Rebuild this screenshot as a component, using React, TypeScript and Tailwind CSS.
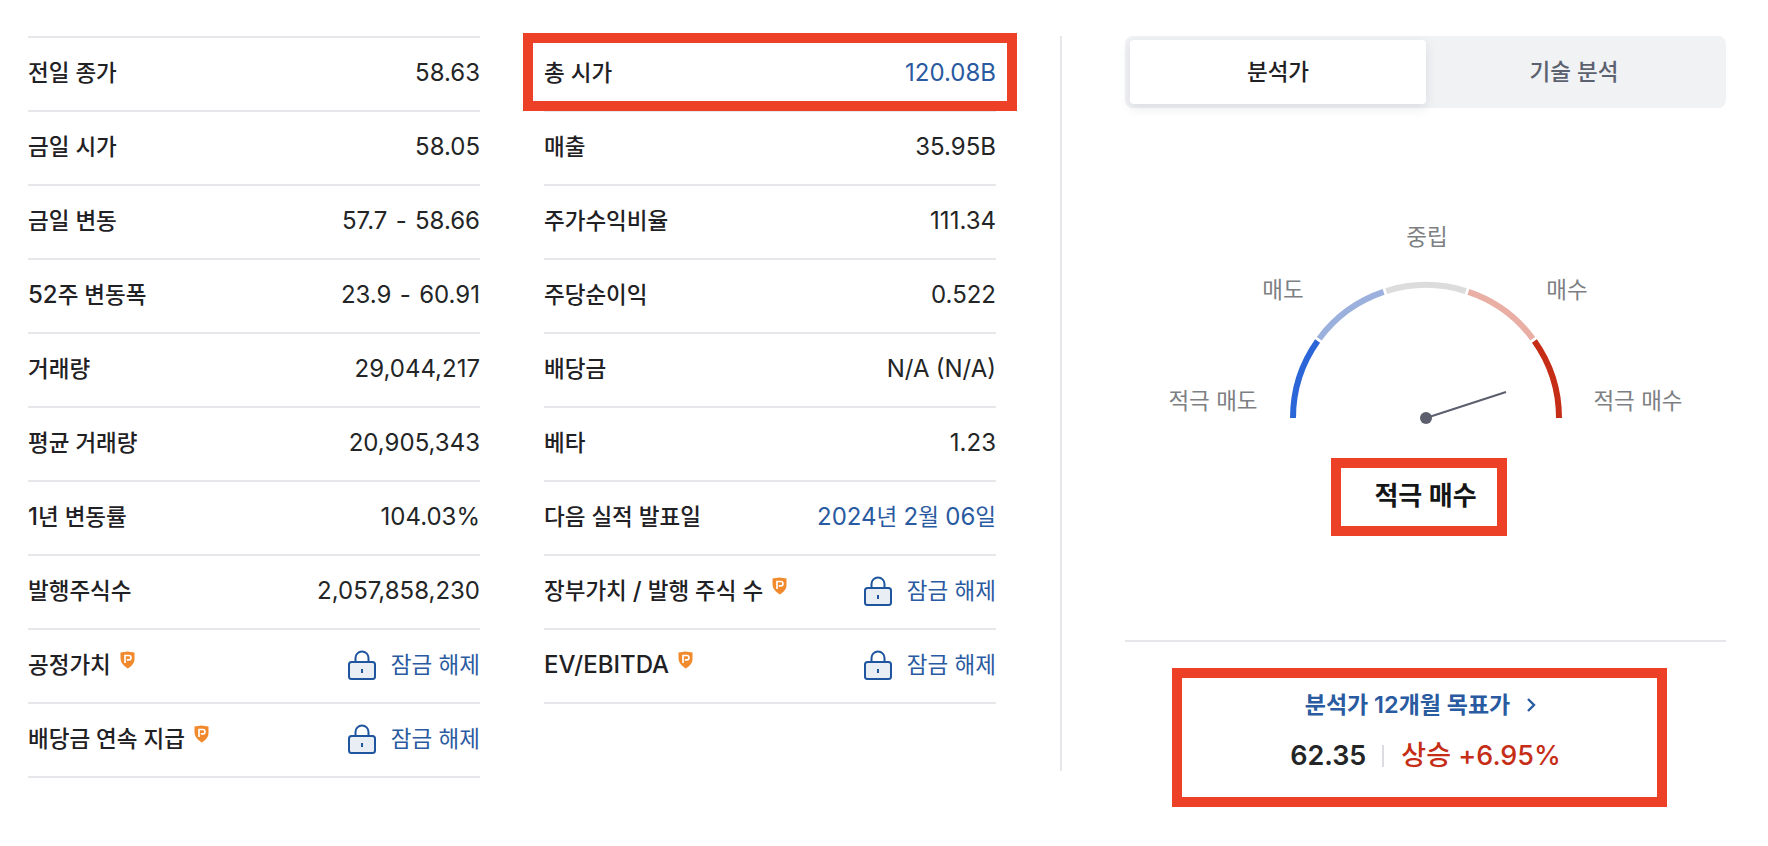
import React from "react";

function Mix({ text, latin = "text-[24px]" }: { text: string; latin?: string }) {
  const parts = text.split(/([A-Za-z0-9.,%+\-/()]+)/);
  return (
    <>
      {parts.map((p, i) =>
        i % 2 === 1 ? (
          <span key={i} className={latin}>
            {p}
          </span>
        ) : (
          <span key={i}>{p}</span>
        )
      )}
    </>
  );
}

function Shield() {
  return (
    <svg width="15" height="18" viewBox="0 0 15 18" className="shrink-0">
      <path d="M0.5 1.5 L7.5 0.5 L14.5 1.5 L14.5 8 C14.5 12 11.5 15.5 7.5 17.5 C5.5 15.5 0.5 13 0.5 7 Z" fill="#f08a2c" />
      <path d="M5 12 V4.5 H9 C11.6 4.5 11.6 8.8 9 8.8 H6.8" fill="none" stroke="#fff" strokeWidth="1.7" />
    </svg>
  );
}

function Lock() {
  return (
    <svg width="28" height="30" viewBox="0 0 28 30" className="shrink-0">
      <path d="M7.5 12 V8 A6.5 6.5 0 0 1 20.5 8 V12" fill="none" stroke="#1f559f" strokeWidth="2" />
      <rect x="1" y="12" width="26" height="17" rx="2.5" fill="#e9eef5" stroke="#1f559f" strokeWidth="2" />
      <rect x="13" y="19" width="2" height="4" fill="#1f559f" />
    </svg>
  );
}

type Row = { label: string; value?: string; blue?: boolean; locked?: boolean };

const left: Row[] = [
  { label: "전일 종가", value: "58.63" },
  { label: "금일 시가", value: "58.05" },
  { label: "금일 변동", value: "57.7 - 58.66" },
  { label: "52주 변동폭", value: "23.9 - 60.91" },
  { label: "거래량", value: "29,044,217" },
  { label: "평균 거래량", value: "20,905,343" },
  { label: "1년 변동률", value: "104.03%" },
  { label: "발행주식수", value: "2,057,858,230" },
  { label: "공정가치", locked: true },
  { label: "배당금 연속 지급", locked: true },
];

const middle: Row[] = [
  { label: "총 시가", value: "120.08B", blue: true },
  { label: "매출", value: "35.95B" },
  { label: "주가수익비율", value: "111.34" },
  { label: "주당순이익", value: "0.522" },
  { label: "배당금", value: "N/A (N/A)" },
  { label: "베타", value: "1.23" },
  { label: "다음 실적 발표일", value: "2024년 2월 06일", blue: true },
  { label: "장부가치 / 발행 주식 수", locked: true },
  { label: "EV/EBITDA", locked: true },
];

function DataRow({ row }: { row: Row }) {
  const range = (row.value ?? "").includes(" - ");
  return (
    <div className="flex h-[74px] items-center justify-between border-b-2 border-[#e6e7eb] pb-[2px]">
      <div className="flex items-start gap-[9px] font-medium text-[#1f2124]">
        <span>
          <Mix text={row.label} />
        </span>
        {row.locked && (
          <span className="mt-[1px]">
            <Shield />
          </span>
        )}
      </div>
      {row.locked ? (
        <div className="flex items-center gap-[15px] text-[#2a5a9f]">
          <Lock />
          <span>잠금 해제</span>
        </div>
      ) : (
        <span className={`${row.blue ? "text-[#2a5a9f]" : "text-[#232526]"} ${range ? "[word-spacing:2px]" : ""}`}>
          <Mix text={row.value ?? ""} />
        </span>
      )}
    </div>
  );
}

function Column({ rows, className }: { rows: Row[]; className?: string }) {
  return (
    <div className={`w-[452px] shrink-0 border-t-2 border-[#e6e7eb] ${className ?? ""}`}>
      {rows.map((r) => (
        <DataRow key={r.label} row={r} />
      ))}
    </div>
  );
}

const R = 133;
const CX = 150;
const CY = 142;
function arc(a0: number, a1: number) {
  const p = (a: number) => {
    const t = (a * Math.PI) / 180;
    return `${(CX - R * Math.cos(t)).toFixed(2)} ${(CY - R * Math.sin(t)).toFixed(2)}`;
  };
  return `M${p(a0)} A${R} ${R} 0 0 1 ${p(a1)}`;
}

function Gauge() {
  return (
    <div className="relative h-[253px] w-full whitespace-nowrap text-[22.5px] leading-[26px] text-[#7d7f83]">
      <span className="absolute left-[272px] top-[0px] w-[60px] text-center">중립</span>
      <span className="absolute left-[128px] top-[53px] w-[60px] text-center">매도</span>
      <span className="absolute left-[412px] top-[53px] w-[60px] text-center">매수</span>
      <span className="absolute left-[28px] top-[164px] w-[120px] text-center">적극 매도</span>
      <span className="absolute left-[453px] top-[164px] w-[120px] text-center">적극 매수</span>
      <svg width="300" height="160" viewBox="0 0 300 160" className="absolute left-[151px] top-[52px]">
        <path d={arc(0, 35.4)} fill="none" stroke="#2b66d9" strokeWidth="6" />
        <path d={arc(36.6, 71.4)} fill="none" stroke="#9bb0dd" strokeWidth="6" />
        <path d={arc(72.6, 107.4)} fill="none" stroke="#dcdcdc" strokeWidth="6" />
        <path d={arc(108.6, 143.4)} fill="none" stroke="#e9aea4" strokeWidth="6" />
        <path d={arc(144.6, 180)} fill="none" stroke="#c52d17" strokeWidth="6" />
        <line x1={CX} y1={CY} x2={CX + 80} y2={CY - 26} stroke="#5b5f6e" strokeWidth="2" />
        <circle cx={CX} cy={CY} r="6" fill="#5b5f6e" />
      </svg>
    </div>
  );
}

export default function App() {
  return (
    <div className="relative flex h-[846px] w-[1768px] overflow-hidden bg-white pl-[28px] pt-[36px] font-['Inter','Noto_Sans_CJK_KR',sans-serif] text-[22.5px] leading-[30px]">
      <Column rows={left} />
      <Column rows={middle} className="ml-[64px] self-start" />
      <div className="ml-[64px] h-[735px] w-[2px] shrink-0 bg-[#e6e7eb]" />
      <div className="ml-[63px] flex w-[601px] shrink-0 flex-col">
        <div className="flex h-[72px] rounded-[8px] bg-[#f1f2f4] py-[4px] pl-[5px] pr-[4px]">
          <div className="flex w-[296px] items-center justify-center rounded-[4px] bg-white font-medium text-[#1f2124] shadow-[0_4px_12px_rgba(20,30,60,0.1)]">분석가</div>
          <div className="flex flex-1 items-center justify-center font-medium text-[#5b616e]">기술 분석</div>
        </div>
        <div className="mt-[116px]">
          <Gauge />
        </div>
        <div className="-mt-[9px] flex h-[56px] items-center justify-center text-[26px] font-semibold text-[#141516]">적극 매수</div>
        <div className="mt-[116px] border-t-2 border-[#e6e7eb]" />
        <div className="mt-[48px] flex items-center justify-center gap-[16px] pr-[10px] text-[23px] font-semibold text-[#2a5a9f]">
          <span>
            <Mix text="분석가 12개월 목표가" latin="text-[23.5px]" />
          </span>
          <svg width="10" height="16" viewBox="0 0 10 16">
            <path d="M2 2 L8 8 L2 14" fill="none" stroke="#2a5a9f" strokeWidth="2.4" />
          </svg>
        </div>
        <div className="mt-[21px] flex items-center justify-center text-[27px] font-semibold">
          <span className="text-[#232526]">62.35</span>
          <span className="mx-[16px] h-[22px] w-[2px] bg-[#dcdde0]" />
          <span className="pl-[1px] font-medium text-[#c52d17]">상승 +6.95%</span>
        </div>
      </div>
      <div className="absolute left-[523px] top-[33px] h-[78px] w-[494px] border-[10px] border-[#ec4126]" />
      <div className="absolute left-[1331px] top-[458px] h-[78px] w-[176px] border-[10px] border-[#ec4126]" />
      <div className="absolute left-[1172px] top-[668px] h-[139px] w-[495px] border-[10px] border-[#ec4126]" />
    </div>
  );
}
